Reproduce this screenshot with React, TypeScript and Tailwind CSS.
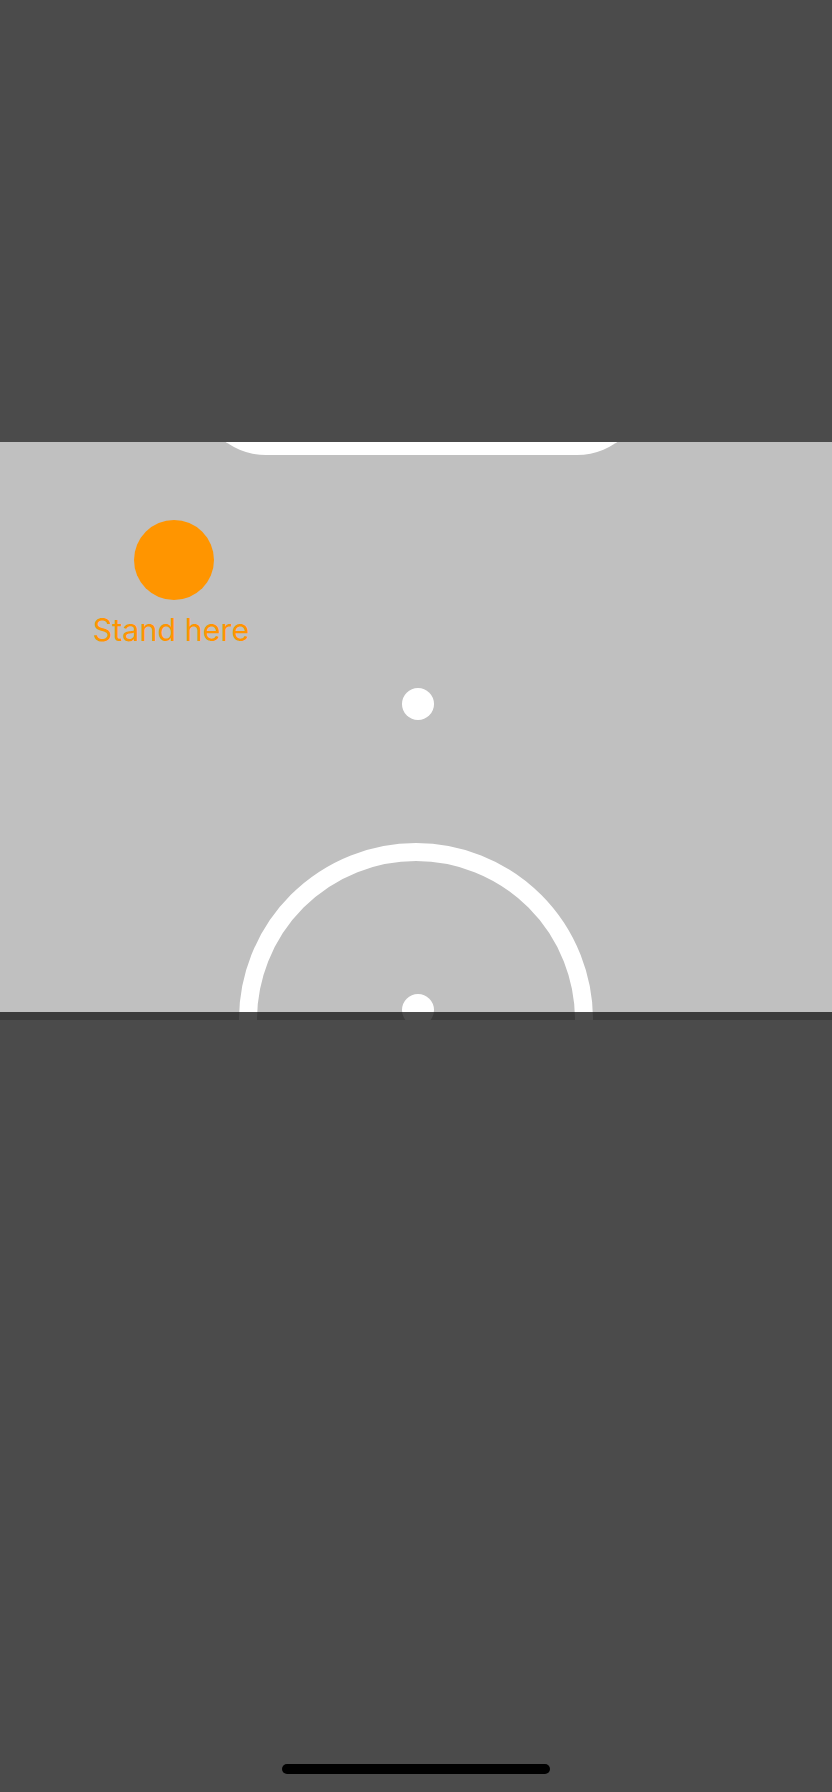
export default function App() {
  return (
    <div className="flex h-[1792px] w-full flex-col bg-[#4b4b4b]">
      <div className="h-[442px] shrink-0" />

      {/* court */}
      <div className="relative h-[578px] shrink-0 overflow-hidden bg-[#c0c0c0]">
        <div className="absolute left-[197px] top-[-150px] h-[163px] w-[449px] rounded-[69px] bg-white" />

        {/* stand marker */}
        <div className="absolute left-[91px] top-[78px] flex w-[160px] flex-col items-center gap-[15px]">
          <div className="ml-[6px] h-[80px] w-[80px] rounded-full bg-[#ff9500]" />
          <span
            className="whitespace-nowrap text-[30.5px] leading-[30px] text-[#ff9500]"
            style={{ fontFamily: 'Inter, "Liberation Sans", sans-serif' }}
          >
            Stand here
          </span>
        </div>

        <div className="absolute left-[402px] top-[246px] h-[32px] w-[32px] rounded-full bg-white" />

        <div className="absolute left-[239px] top-[401px] h-[354px] w-[354px] rounded-full border-[18px] border-white" />
        <div className="absolute left-[402px] top-[552px] h-[32px] w-[32px] rounded-full bg-white" />

        <div className="absolute bottom-0 left-0 h-[8px] w-full bg-[rgba(19,19,19,0.76)]" />
      </div>

      <div className="flex flex-1 flex-col items-center justify-end pb-[18px]">
        <div className="h-[10px] w-[268px] rounded-full bg-black" />
      </div>
    </div>
  );
}
